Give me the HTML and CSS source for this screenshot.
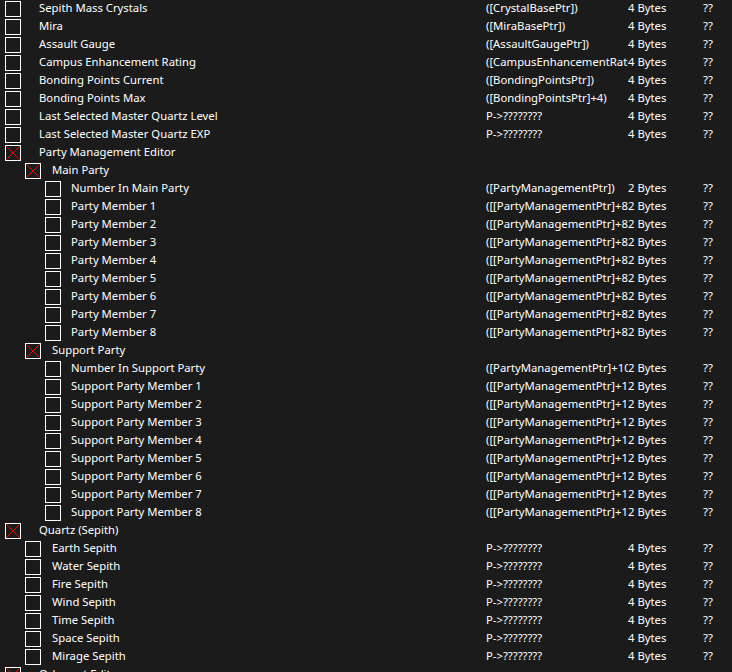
FILE: index.html
```html
<!DOCTYPE html>
<html>
<head>
<meta charset="utf-8">
<link rel="stylesheet" href="styles.css">
</head>
<body>
<div class="list">
  <div class="row l0"><span class="cb"></span><span class="desc">Sepith Mass Crystals</span><span class="addr">([CrystalBasePtr])</span><span class="type">4 Bytes</span><span class="val">??</span></div>
  <div class="row l0"><span class="cb"></span><span class="desc">Mira</span><span class="addr">([MiraBasePtr])</span><span class="type">4 Bytes</span><span class="val">??</span></div>
  <div class="row l0"><span class="cb"></span><span class="desc">Assault Gauge</span><span class="addr">([AssaultGaugePtr])</span><span class="type">4 Bytes</span><span class="val">??</span></div>
  <div class="row l0"><span class="cb"></span><span class="desc">Campus Enhancement Rating</span><span class="addr">([CampusEnhancementRatingPtr])</span><span class="type">4 Bytes</span><span class="val">??</span></div>
  <div class="row l0"><span class="cb"></span><span class="desc">Bonding Points Current</span><span class="addr">([BondingPointsPtr])</span><span class="type">4 Bytes</span><span class="val">??</span></div>
  <div class="row l0"><span class="cb"></span><span class="desc">Bonding Points Max</span><span class="addr">([BondingPointsPtr]+4)</span><span class="type">4 Bytes</span><span class="val">??</span></div>
  <div class="row l0"><span class="cb"></span><span class="desc">Last Selected Master Quartz Level</span><span class="addr">P-&gt;????????</span><span class="type">4 Bytes</span><span class="val">??</span></div>
  <div class="row l0"><span class="cb"></span><span class="desc">Last Selected Master Quartz EXP</span><span class="addr">P-&gt;????????</span><span class="type">4 Bytes</span><span class="val">??</span></div>
  <div class="row l0"><span class="cb x"><svg viewBox="0 0 14 14"><path d="M0.5 0.5L13.5 13.5M13.5 0.5L0.5 13.5"/></svg></span><span class="desc">Party Management Editor</span><span class="addr"></span><span class="type"></span><span class="val"></span></div>
  <div class="row l1"><span class="cb x"><svg viewBox="0 0 14 14"><path d="M0.5 0.5L13.5 13.5M13.5 0.5L0.5 13.5"/></svg></span><span class="desc">Main Party</span><span class="addr"></span><span class="type"></span><span class="val"></span></div>
  <div class="row l2"><span class="cb"></span><span class="desc">Number In Main Party</span><span class="addr">([PartyManagementPtr])</span><span class="type">2 Bytes</span><span class="val">??</span></div>
  <div class="row l2"><span class="cb"></span><span class="desc">Party Member 1</span><span class="addr">([[PartyManagementPtr]+8]+0)</span><span class="type">2 Bytes</span><span class="val">??</span></div>
  <div class="row l2"><span class="cb"></span><span class="desc">Party Member 2</span><span class="addr">([[PartyManagementPtr]+8]+2)</span><span class="type">2 Bytes</span><span class="val">??</span></div>
  <div class="row l2"><span class="cb"></span><span class="desc">Party Member 3</span><span class="addr">([[PartyManagementPtr]+8]+4)</span><span class="type">2 Bytes</span><span class="val">??</span></div>
  <div class="row l2"><span class="cb"></span><span class="desc">Party Member 4</span><span class="addr">([[PartyManagementPtr]+8]+6)</span><span class="type">2 Bytes</span><span class="val">??</span></div>
  <div class="row l2"><span class="cb"></span><span class="desc">Party Member 5</span><span class="addr">([[PartyManagementPtr]+8]+8)</span><span class="type">2 Bytes</span><span class="val">??</span></div>
  <div class="row l2"><span class="cb"></span><span class="desc">Party Member 6</span><span class="addr">([[PartyManagementPtr]+8]+A)</span><span class="type">2 Bytes</span><span class="val">??</span></div>
  <div class="row l2"><span class="cb"></span><span class="desc">Party Member 7</span><span class="addr">([[PartyManagementPtr]+8]+C)</span><span class="type">2 Bytes</span><span class="val">??</span></div>
  <div class="row l2"><span class="cb"></span><span class="desc">Party Member 8</span><span class="addr">([[PartyManagementPtr]+8]+E)</span><span class="type">2 Bytes</span><span class="val">??</span></div>
  <div class="row l1"><span class="cb x"><svg viewBox="0 0 14 14"><path d="M0.5 0.5L13.5 13.5M13.5 0.5L0.5 13.5"/></svg></span><span class="desc">Support Party</span><span class="addr"></span><span class="type"></span><span class="val"></span></div>
  <div class="row l2"><span class="cb"></span><span class="desc">Number In Support Party</span><span class="addr">([PartyManagementPtr]+10)</span><span class="type">2 Bytes</span><span class="val">??</span></div>
  <div class="row l2"><span class="cb"></span><span class="desc">Support Party Member 1</span><span class="addr">([[PartyManagementPtr]+18]+0)</span><span class="type">2 Bytes</span><span class="val">??</span></div>
  <div class="row l2"><span class="cb"></span><span class="desc">Support Party Member 2</span><span class="addr">([[PartyManagementPtr]+18]+2)</span><span class="type">2 Bytes</span><span class="val">??</span></div>
  <div class="row l2"><span class="cb"></span><span class="desc">Support Party Member 3</span><span class="addr">([[PartyManagementPtr]+18]+4)</span><span class="type">2 Bytes</span><span class="val">??</span></div>
  <div class="row l2"><span class="cb"></span><span class="desc">Support Party Member 4</span><span class="addr">([[PartyManagementPtr]+18]+6)</span><span class="type">2 Bytes</span><span class="val">??</span></div>
  <div class="row l2"><span class="cb"></span><span class="desc">Support Party Member 5</span><span class="addr">([[PartyManagementPtr]+18]+8)</span><span class="type">2 Bytes</span><span class="val">??</span></div>
  <div class="row l2"><span class="cb"></span><span class="desc">Support Party Member 6</span><span class="addr">([[PartyManagementPtr]+18]+A)</span><span class="type">2 Bytes</span><span class="val">??</span></div>
  <div class="row l2"><span class="cb"></span><span class="desc">Support Party Member 7</span><span class="addr">([[PartyManagementPtr]+18]+C)</span><span class="type">2 Bytes</span><span class="val">??</span></div>
  <div class="row l2"><span class="cb"></span><span class="desc">Support Party Member 8</span><span class="addr">([[PartyManagementPtr]+18]+E)</span><span class="type">2 Bytes</span><span class="val">??</span></div>
  <div class="row l0"><span class="cb x"><svg viewBox="0 0 14 14"><path d="M0.5 0.5L13.5 13.5M13.5 0.5L0.5 13.5"/></svg></span><span class="desc">Quartz (Sepith)</span><span class="addr"></span><span class="type"></span><span class="val"></span></div>
  <div class="row l1"><span class="cb"></span><span class="desc">Earth Sepith</span><span class="addr">P-&gt;????????</span><span class="type">4 Bytes</span><span class="val">??</span></div>
  <div class="row l1"><span class="cb"></span><span class="desc">Water Sepith</span><span class="addr">P-&gt;????????</span><span class="type">4 Bytes</span><span class="val">??</span></div>
  <div class="row l1"><span class="cb"></span><span class="desc">Fire Sepith</span><span class="addr">P-&gt;????????</span><span class="type">4 Bytes</span><span class="val">??</span></div>
  <div class="row l1"><span class="cb"></span><span class="desc">Wind Sepith</span><span class="addr">P-&gt;????????</span><span class="type">4 Bytes</span><span class="val">??</span></div>
  <div class="row l1"><span class="cb"></span><span class="desc">Time Sepith</span><span class="addr">P-&gt;????????</span><span class="type">4 Bytes</span><span class="val">??</span></div>
  <div class="row l1"><span class="cb"></span><span class="desc">Space Sepith</span><span class="addr">P-&gt;????????</span><span class="type">4 Bytes</span><span class="val">??</span></div>
  <div class="row l1"><span class="cb"></span><span class="desc">Mirage Sepith</span><span class="addr">P-&gt;????????</span><span class="type">4 Bytes</span><span class="val">??</span></div>
  <div class="row l0"><span class="cb x"><svg viewBox="0 0 14 14"><path d="M0.5 0.5L13.5 13.5M13.5 0.5L0.5 13.5"/></svg></span><span class="desc">Orbment Editor</span><span class="addr"></span><span class="type"></span><span class="val"></span></div>
</div>
</body>
</html>
```
FILE: styles.css
```css
html, body {
  margin: 0;
  padding: 0;
  background: #1b1b1b;
  overflow: hidden;
}
.list {
  width: 732px;
  height: 672px;
  overflow: hidden;
  font-family: "Noto Sans", "Open Sans", sans-serif;
  font-size: 11.3px;
  color: #ffffff;
}
.row {
  display: grid;
  grid-template-columns: auto 1fr 142px 75px 29px;
  align-items: start;
  height: 18px;
  white-space: nowrap;
}
.row.l0 { padding-left: 5px; }
.row.l1 { padding-left: 25px; }
.row.l2 { padding-left: 45px; }
.cb {
  box-sizing: border-box;
  width: 16px;
  height: 16px;
  margin-top: 1px;
  border: 1px solid #ffffff;
  display: block;
}
.cb svg {
  display: block;
  width: 14px;
  height: 14px;
}
.cb svg path {
  stroke: #ff0000;
  stroke-width: 1;
  fill: none;
}
.desc, .addr, .type, .val {
  overflow: hidden;
  line-height: 16px;
}
.l0 .desc { padding-left: 18px; }
.l1 .desc { padding-left: 11px; }
.l2 .desc { padding-left: 10px; }
```
